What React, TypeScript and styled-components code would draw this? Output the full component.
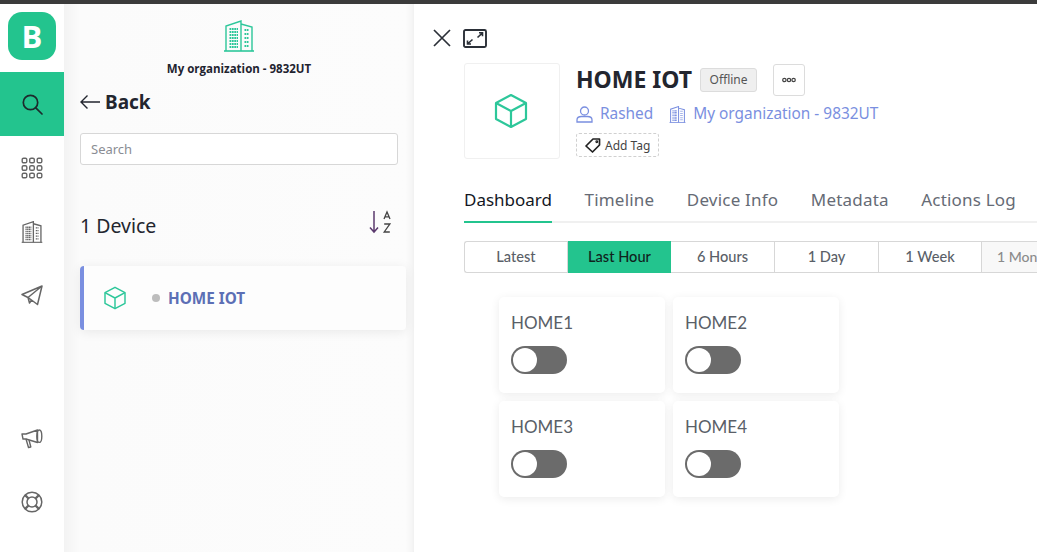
import React from 'react';
import styled, { createGlobalStyle } from 'styled-components';

const GlobalStyle = createGlobalStyle`
    html, body {
        margin: 0;
        padding: 0;
        height: 100%;
        overflow: hidden;
        background: #fff;
        font-family: "Noto Sans", "Open Sans", sans-serif;
    }
    * { box-sizing: border-box; }
`;

const Page = styled.div`
    width: 1037px;
    height: 552px;
    display: flex;
    flex-direction: column;
    overflow: hidden;
`;
const TopLine = styled.div`
    height: 4px;
    flex: none;
    background: #3b3b3b;
`;
const Body = styled.div`
    flex: 1;
    display: flex;
    min-height: 0;
`;

const Rail = styled.nav`
    width: 64px;
    flex: none;
    background: #fff;
    display: flex;
    flex-direction: column;
    padding-top: 8px;
`;
const Logo = styled.div`
    width: 48px;
    height: 48px;
    margin: 0 8px 12px;
    border-radius: 14px;
    background: #23c48e;
    color: #fff;
    font-family: "Open Sans", sans-serif;
    font-weight: 700;
    font-size: 31px;
    line-height: 48px;
    text-align: center;
`;
const RailItem = styled.div<{ $active?: boolean }>`
    height: 64px;
    display: flex;
    align-items: center;
    justify-content: center;
    background: ${(p) => (p.$active ? '#23c48e' : 'transparent')};
    color: ${(p) => (p.$active ? '#1d2a2c' : '#666')};
`;
const RailSpacer = styled.div`
    height: 79px;
    flex: none;
`;
const RailFoot = styled(RailItem)`
    height: 63px;
`;

const Side = styled.aside`
    width: 350px;
    flex: none;
    background: linear-gradient(90deg, #f3f3f3 0, #fbfbfb 16px, #fcfcfc 100%);
    padding: 16px 16px 0;
    position: relative;
    box-shadow: inset -10px 0 10px -10px #e6e6e6;
`;
const OrgHead = styled.div`
    display: flex;
    flex-direction: column;
    align-items: center;
    height: 61px;
    color: #23c48e;
`;
const OrgName = styled.div`
    margin-top: 9px;
    font-family: "Open Sans", sans-serif;
    font-size: 11.5px;
    line-height: 15px;
    font-weight: 700;
    color: #1f2430;
    white-space: nowrap;
`;
const BackRow = styled.div`
    display: flex;
    align-items: center;
    gap: 5px;
    height: 32px;
    margin-top: 5px;
    color: #23262f;
`;
const BackText = styled.span`
    font-size: 19px;
    font-weight: 700;
    line-height: 32px;
`;
const SearchBox = styled.div`
    width: 318px;
    height: 32px;
    margin-top: 15px;
    padding-left: 10px;
    background: #fff;
    border: 1px solid #d7d7d7;
    border-radius: 3px;
    font-size: 13px;
    line-height: 30px;
    color: #8a8d94;
`;
const CountRow = styled.div`
    display: flex;
    align-items: center;
    justify-content: space-between;
    width: 318px;
    height: 34px;
    margin-top: 44px;
    padding-right: 7px;
`;
const CountText = styled.span`
    font-size: 19.5px;
    line-height: 34px;
    color: #23262f;
`;
const SortSlot = styled.span`
    display: flex;
    margin-bottom: 8px;
`;
const DeviceCard = styled.div`
    width: 326px;
    height: 64px;
    margin-top: 23px;
    display: flex;
    align-items: center;
    padding-left: 19px;
    background: #fdfdfd;
    border-left: 4px solid #7a8fe0;
    border-radius: 4px;
    box-shadow: 0 2px 12px rgba(0, 0, 0, 0.08);
`;
const Dot = styled.span`
    width: 8px;
    height: 8px;
    margin-left: 25px;
    margin-right: 8px;
    border-radius: 50%;
    background: #bdbdbd;
`;
const DeviceName = styled.span`
    font-size: 15.3px;
    font-weight: 700;
    color: #5c6fb5;
`;

const Main = styled.main`
    flex: 1;
    min-width: 0;
    background: #fff;
    padding: 22px 0 0 18px;
    overflow: hidden;
`;
const Tools = styled.div`
    display: flex;
    align-items: center;
    gap: 12px;
    height: 24px;
    padding-left: 1px;
    color: #2b3038;
`;
const Header = styled.div`
    display: flex;
    gap: 16px;
    margin: 13px 0 0 32px;
`;
const DeviceTile = styled.div`
    width: 96px;
    height: 96px;
    display: flex;
    align-items: center;
    justify-content: center;
    padding-right: 2px;
    border: 1px solid #f0f0f0;
    border-radius: 3px;
`;
const HeadInfo = styled.div`
    display: flex;
    flex-direction: column;
`;
const TitleRow = styled.div`
    display: flex;
    align-items: center;
    height: 33px;
`;
const Title = styled.h1`
    margin: 0 8px 0 0;
    font-size: 23px;
    line-height: 33px;
    font-weight: 700;
    color: #23262f;
`;
const Badge = styled.span`
    width: 57px;
    height: 24px;
    background: #efefef;
    border: 1px solid #dcdcdc;
    border-radius: 3px;
    font-size: 12px;
    line-height: 22px;
    text-align: center;
    color: #555;
`;
const MoreButton = styled.button`
    width: 32px;
    height: 32px;
    margin-left: 16px;
    padding: 0;
    display: flex;
    align-items: center;
    justify-content: center;
    background: #fff;
    border: 1px solid #dcdcdc;
    border-radius: 3px;
    color: #444;
`;
const MetaRow = styled.div`
    display: flex;
    align-items: center;
    height: 24px;
    margin-top: 6px;
    color: #7a8fe0;
`;
const MetaText = styled.span`
    margin-left: 7px;
    margin-right: 16px;
    font-size: 15.4px;
    line-height: 24px;
    white-space: nowrap;
`;
const TagButton = styled.div`
    display: flex;
    align-items: center;
    gap: 4px;
    width: 83px;
    height: 24px;
    margin-top: 7px;
    padding-left: 8px;
    border: 1px dashed #d0d0d0;
    border-radius: 3px;
    font-size: 12px;
    color: #444;
`;
const Tabs = styled.div`
    display: flex;
    gap: 32.5px;
    height: 41px;
    margin: 23px 0 0 32px;
    border-bottom: 2px solid #f0f0f0;
`;
const Tab = styled.div<{ $active?: boolean }>`
    height: 41px;
    padding-top: 4px;
    font-size: 17px;
    line-height: 27px;
    white-space: nowrap;
    letter-spacing: ${(p) => (p.$active ? '0' : '0.2px')};
    color: ${(p) => (p.$active ? '#13171f' : '#666b75')};
    border-bottom: 2px solid ${(p) => (p.$active ? '#23c48e' : 'transparent')};
`;
const Ranges = styled.div`
    display: flex;
    height: 32px;
    margin: 18px 0 0 32px;
    border: 1px solid #d7d7d7;
    border-right: none;
    border-radius: 3px 0 0 3px;
`;
const Range = styled.div<{ $active?: boolean; $faded?: boolean; $w: number }>`
    width: ${(p) => p.$w}px;
    flex: none;
    margin: ${(p) => (p.$active ? '-1px 0' : '0')};
    padding-left: ${(p) => (p.$faded ? '15px' : '0')};
    border-right: ${(p) => (p.$active ? 'none' : '1px solid #d7d7d7')};
    background: ${(p) => (p.$active ? '#23c48e' : p.$faded ? '#f8f8f8' : 'transparent')};
    color: ${(p) => (p.$active ? '#10231d' : p.$faded ? '#8b8b8b' : '#5a5f68')};
    font-family: "Lato", sans-serif;
    font-size: ${(p) => (p.$faded ? '14px' : '14.6px')};
    font-weight: 500;
    line-height: ${(p) => (p.$active ? '32px' : '30px')};
    text-align: ${(p) => (p.$faded ? 'left' : 'center')};
    white-space: nowrap;
`;
const Widgets = styled.div`
    display: grid;
    grid-template-columns: 166px 166px;
    grid-auto-rows: 96px;
    gap: 8px;
    margin: 24px 0 0 67px;
`;
const Widget = styled.div`
    padding: 14px 12px 0;
    background: #fff;
    border-radius: 5px;
    box-shadow: 0 2px 10px rgba(0, 0, 0, 0.08);
`;
const WidgetName = styled.div`
    font-family: "Lato", sans-serif;
    font-size: 17px;
    line-height: 24px;
    color: #5a5f68;
`;
const Toggle = styled.div`
    width: 56px;
    height: 28px;
    margin-top: 11px;
    padding: 2px;
    border-radius: 14px;
    background: #6b6b6b;
`;
const Knob = styled.div`
    width: 24px;
    height: 24px;
    border-radius: 50%;
    background: #fff;
`;

const CubeIcon = ({ size }: { size: number }) => (
    <svg width={size} height={size} viewBox="0 0 36 36" fill="none" stroke="#2dc79a" strokeWidth="2.2" strokeLinejoin="round">
        <path d="M18 2 L33 10 V26 L18 34 L3 26 V10 Z" />
        <path d="M3 10 L18 18 L33 10 M18 18 V34" />
    </svg>
);

const BuildingIcon = ({ size, color }: { size: number; color: string }) => (
    <svg width={size} height={size} viewBox="0 0 32 32" fill="none" stroke={color} strokeWidth={size < 30 ? 1.9 : 1.4}>
        <path d="M1 31 H31" strokeWidth="1.6" />
        <path d="M3 31 V6 L18 1 V31 M18 4 L29 7 V31" />
        <path d="M6.5 9 H15 M6.5 12 H15 M6.5 15 H15 M6.5 18 H15 M6.5 21 H15 M6.5 24 H15 M6.5 27 H15" strokeWidth="2" strokeDasharray="1.8 0.6" />
        <path d="M21.5 10 H25.5 M21.5 14 H25.5 M21.5 18 H25.5 M21.5 22 H25.5 M21.5 26 H25.5" strokeWidth="2" strokeDasharray="1.8 0.6" />
    </svg>
);

const SearchIcon = () => (
    <svg width="22" height="22" viewBox="0 0 22 22" fill="none" stroke="currentColor" strokeWidth="1.7">
        <circle cx="9.5" cy="9.5" r="7.2" />
        <path d="M14.8 14.8 L21 21" strokeLinecap="round" />
    </svg>
);

const GridIcon = () => (
    <svg width="22" height="22" viewBox="0 0 22 22" fill="none" stroke="currentColor" strokeWidth="1.4">
        {[3.5, 11, 18.5].map((y) =>
            [3.5, 11, 18.5].map((x) => <rect key={`${x}-${y}`} x={x - 2.3} y={y - 2.3} width="4.6" height="4.6" rx="1.4" />)
        )}
    </svg>
);

const PlaneIcon = () => (
    <svg width="22" height="22" viewBox="0 0 22 22" fill="none" stroke="currentColor" strokeWidth="1.5" strokeLinejoin="round">
        <path d="M21 1 L1 9.5 L7 12.5 L21 1 L16.5 19.5 L10.5 15 L7 12.5 L8.5 18 L10.5 15" />
    </svg>
);

const MegaphoneIcon = () => (
    <svg width="22" height="20" viewBox="0 0 22 20" fill="none" stroke="currentColor" strokeWidth="1.4" strokeLinejoin="round">
        <path d="M1 5 H5 L16.5 1 V13.5 L5 10 H2 Z" />
        <ellipse cx="18.3" cy="7.2" rx="2.5" ry="6.2" />
        <path d="M5 10 L7.5 18.5 L9.8 18 L8 11" />
    </svg>
);

const BuoyIcon = () => (
    <svg width="22" height="22" viewBox="0 0 22 22" fill="none" stroke="currentColor" strokeWidth="1.5">
        <circle cx="11" cy="11" r="9.8" />
        <circle cx="11" cy="11" r="5" />
        <path d="M4 4 L7.5 7.5 M18 4 L14.5 7.5 M4 18 L7.5 14.5 M18 18 L14.5 14.5" strokeWidth="2.4" />
    </svg>
);

const BackArrow = () => (
    <svg width="20" height="14" viewBox="0 0 20 14" fill="none" stroke="currentColor" strokeWidth="1.4">
        <path d="M20 7 H1 M7.5 0.5 L1 7 L7.5 13.5" />
    </svg>
);

const SortIcon = () => (
    <svg width="22" height="24" viewBox="0 0 22 24" fill="none">
        <path d="M5 1 V21.5 M1 17.5 L5 22 L9 17.5" stroke="#5b3a6e" strokeWidth="1.5" />
        <path d="M15 9 L18 2 L21 9 M16 6.8 H20" stroke="#444" strokeWidth="1.3" />
        <path d="M15.2 14 H20.8 L15.2 22 H20.8" stroke="#444" strokeWidth="1.3" />
    </svg>
);

const CloseIcon = () => (
    <svg width="18" height="18" viewBox="0 0 18 18" fill="none" stroke="currentColor" strokeWidth="1.7">
        <path d="M1 1 L17 17 M17 1 L1 17" />
    </svg>
);

const ExpandIcon = () => (
    <svg width="24" height="19" viewBox="0 0 24 19" fill="none" stroke="currentColor">
        <rect x="1" y="1" width="22" height="17" rx="1.5" strokeWidth="1.9" />
        <path d="M14.5 8.5 L19.5 3.8 M16 3.8 H19.5 V7.2 M9.5 10.5 L4.5 15 M4.5 11.5 V15 H8" strokeWidth="1.6" />
    </svg>
);

const UserIcon = () => (
    <svg width="17" height="17" viewBox="0 0 17 17" fill="none" stroke="currentColor" strokeWidth="1.3">
        <circle cx="8.5" cy="5" r="4" />
        <path d="M1 16 V14 C1 11.5 3.5 10.5 5.5 10.5 H11.5 C13.5 10.5 16 11.5 16 14 V16 Z" />
    </svg>
);

const TagIcon = () => (
    <svg width="16" height="16" viewBox="0 0 16 16" fill="none" stroke="#222" strokeWidth="1.7" strokeLinejoin="round">
        <path d="M1 9 L8 2 H14.5 V8 L7.5 15 Z" />
        <circle cx="11.8" cy="4.8" r="0.6" />
    </svg>
);

const DotsIcon = () => (
    <svg width="14" height="6" viewBox="0 0 14 6" fill="none" stroke="currentColor" strokeWidth="1.2">
        <circle cx="2.4" cy="3" r="1.7" />
        <circle cx="7" cy="3" r="1.7" />
        <circle cx="11.6" cy="3" r="1.7" />
    </svg>
);

const tabs = ['Dashboard', 'Timeline', 'Device Info', 'Metadata', 'Actions Log'];
const ranges = [
    { label: 'Latest', w: 103 },
    { label: 'Last Hour', w: 103, active: true },
    { label: '6 Hours', w: 104 },
    { label: '1 Day', w: 104 },
    { label: '1 Week', w: 103 },
    { label: '1 Month', w: 103, faded: true },
];
const widgets = ['HOME1', 'HOME2', 'HOME3', 'HOME4'];

const App = () => (
    <Page>
        <GlobalStyle />
        <TopLine />
        <Body>
            <Rail>
                <Logo>B</Logo>
                <RailItem $active><SearchIcon /></RailItem>
                <RailItem><GridIcon /></RailItem>
                <RailItem><BuildingIcon size={22} color="#666" /></RailItem>
                <RailItem><PlaneIcon /></RailItem>
                <RailSpacer />
                <RailFoot><MegaphoneIcon /></RailFoot>
                <RailFoot><BuoyIcon /></RailFoot>
            </Rail>
            <Side>
                <OrgHead>
                    <BuildingIcon size={32} color="#2dc79a" />
                    <OrgName>My organization - 9832UT</OrgName>
                </OrgHead>
                <BackRow>
                    <BackArrow />
                    <BackText>Back</BackText>
                </BackRow>
                <SearchBox>Search</SearchBox>
                <CountRow>
                    <CountText>1 Device</CountText>
                    <SortSlot><SortIcon /></SortSlot>
                </CountRow>
                <DeviceCard>
                    <CubeIcon size={24} />
                    <Dot />
                    <DeviceName>HOME IOT</DeviceName>
                </DeviceCard>
            </Side>
            <Main>
                <Tools>
                    <CloseIcon />
                    <ExpandIcon />
                </Tools>
                <Header>
                    <DeviceTile><CubeIcon size={36} /></DeviceTile>
                    <HeadInfo>
                        <TitleRow>
                            <Title>HOME IOT</Title>
                            <Badge>Offline</Badge>
                            <MoreButton><DotsIcon /></MoreButton>
                        </TitleRow>
                        <MetaRow>
                            <UserIcon />
                            <MetaText>Rashed</MetaText>
                            <BuildingIcon size={17} color="#7a8fe0" />
                            <MetaText>My organization - 9832UT</MetaText>
                        </MetaRow>
                        <TagButton>
                            <TagIcon />
                            Add Tag
                        </TagButton>
                    </HeadInfo>
                </Header>
                <Tabs>
                    {tabs.map((t, i) => (
                        <Tab key={t} $active={i === 0}>{t}</Tab>
                    ))}
                </Tabs>
                <Ranges>
                    {ranges.map((r) => (
                        <Range key={r.label} $w={r.w} $active={r.active} $faded={r.faded}>{r.label}</Range>
                    ))}
                </Ranges>
                <Widgets>
                    {widgets.map((w) => (
                        <Widget key={w}>
                            <WidgetName>{w}</WidgetName>
                            <Toggle><Knob /></Toggle>
                        </Widget>
                    ))}
                </Widgets>
            </Main>
        </Body>
    </Page>
);

export default App;
